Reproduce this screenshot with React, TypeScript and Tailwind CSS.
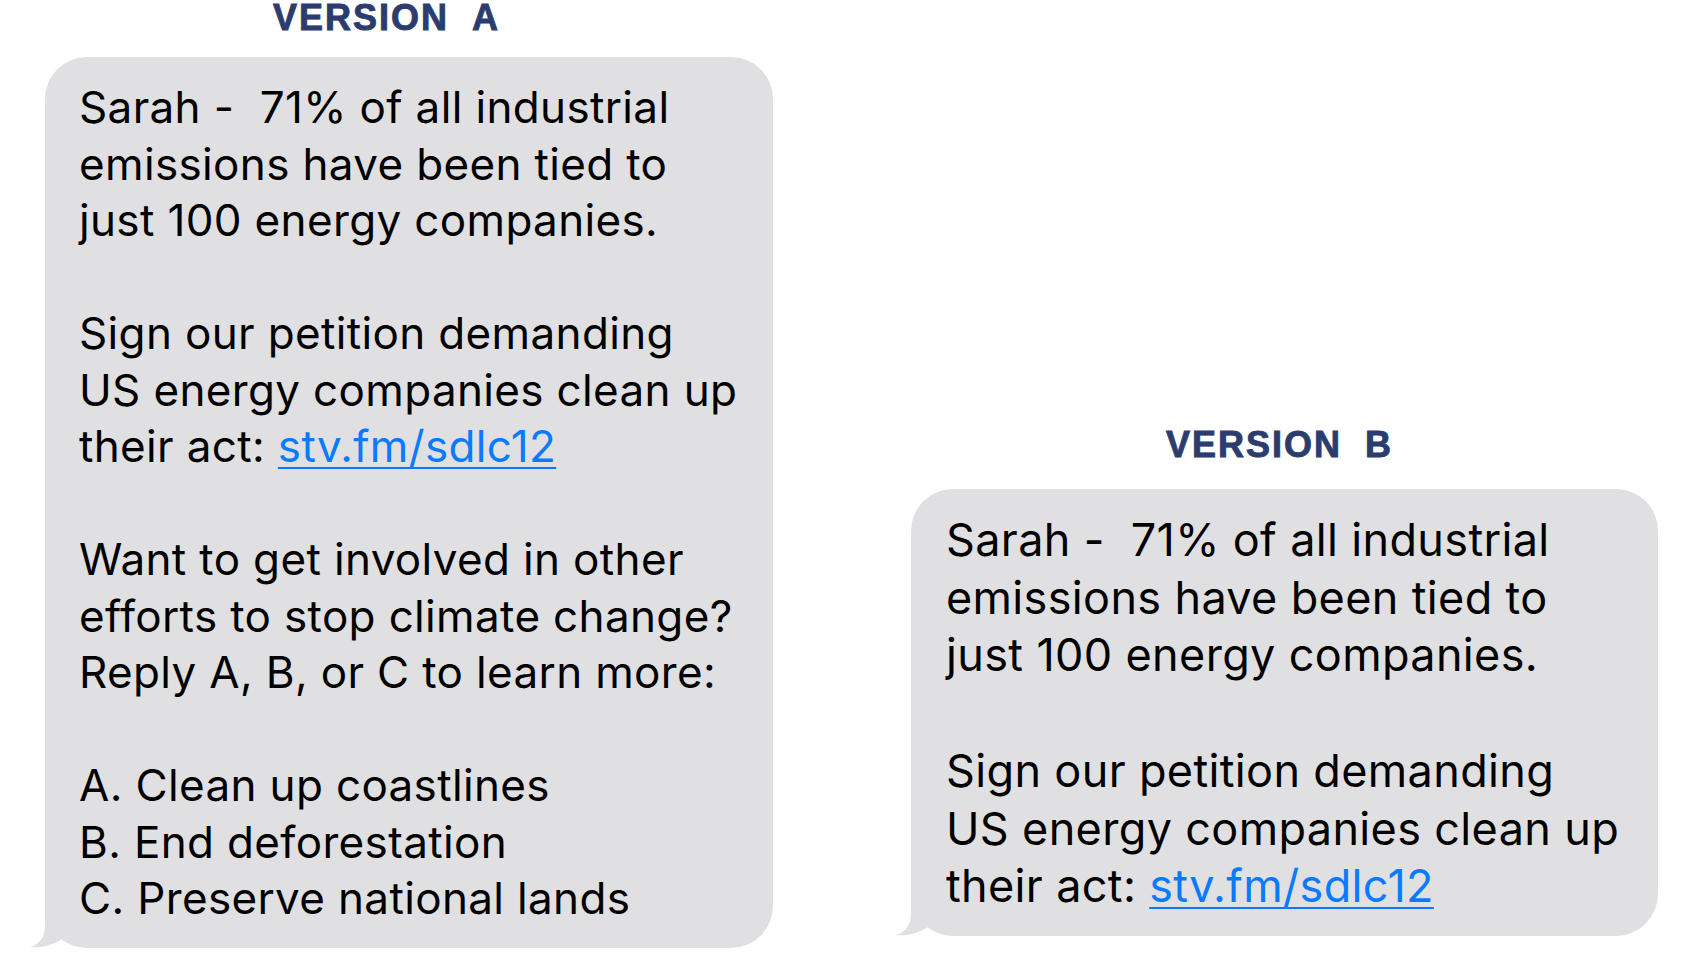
import React from "react";

type Para = React.ReactNode[];

function Link({ children }: { children: React.ReactNode }) {
  return (
    <span className="text-[#0a7aff] underline decoration-2 underline-offset-[5px]">
      {children}
    </span>
  );
}

function Tail() {
  return (
    <svg
      className="absolute left-[-16px] bottom-0"
      width="60"
      height="42"
      viewBox="0 0 60 42"
    >
      <path
        d="M16 0 L16 18 C16 30 12 38 1 41 C12 42.5 24 39 33 33 L50 0 Z"
        fill="#e0e0e2"
      />
    </svg>
  );
}

function Bubble({ paras, className }: { paras: Para[]; className: string }) {
  return (
    <div className={"relative rounded-[42px] bg-[#e0e0e2] text-black tracking-[0.35px] " + className}>
      <Tail />
      <div className="relative flex flex-col">
        {paras.map((lines, i) => (
          <div key={i}>
            {i > 0 && <div>&nbsp;</div>}
            {lines.map((line, j) => (
              <div key={j} className="whitespace-pre">
                {line}
              </div>
            ))}
          </div>
        ))}
      </div>
    </div>
  );
}

function Title({ letter }: { letter: string }) {
  return (
    <div className="flex gap-[23px] font-['Liberation_Sans',Arial,sans-serif] text-[36px] font-bold leading-none tracking-[2px] text-[#2c3c6e] [-webkit-text-stroke:0.9px_#2c3c6e]">
      <span>VERSION</span>
      <span>{letter}</span>
    </div>
  );
}

const intro: Para = [
  "Sarah -  71% of all industrial",
  "emissions have been tied to",
  "just 100 energy companies.",
];

const petition: Para = [
  "Sign our petition demanding",
  "US energy companies clean up",
  <>
    their act: <Link>stv.fm/sdlc12</Link>
  </>,
];

export default function App() {
  return (
    <div className="flex h-[978px] w-[1691px] items-start overflow-hidden bg-white font-['Inter','Noto_Sans',sans-serif]">
      <div className="ml-[45px] flex w-[728px] flex-col">
        <div className="flex justify-start pl-[228px]">
          <Title letter="A" />
        </div>
        <Bubble
          className="mt-[21px] pl-[34px] pt-[22px] pb-[21px] text-[44px] leading-[56.5px]"
          paras={[
            intro,
            petition,
            [
              "Want to get involved in other",
              "efforts to stop climate change?",
              "Reply A, B, or C to learn more:",
            ],
            [
              "A. Clean up coastlines",
              "B. End deforestation",
              "C. Preserve national lands",
            ],
          ]}
        />
      </div>

      <div className="ml-[138px] mt-[427px] flex w-[747px] flex-col">
        <div className="flex justify-start pl-[255px]">
          <Title letter="B" />
        </div>
        <Bubble
          className="mt-[26px] pl-[35px] pt-[22px] pb-[21px] text-[45px] leading-[57.7px]"
          paras={[intro, petition]}
        />
      </div>
    </div>
  );
}
